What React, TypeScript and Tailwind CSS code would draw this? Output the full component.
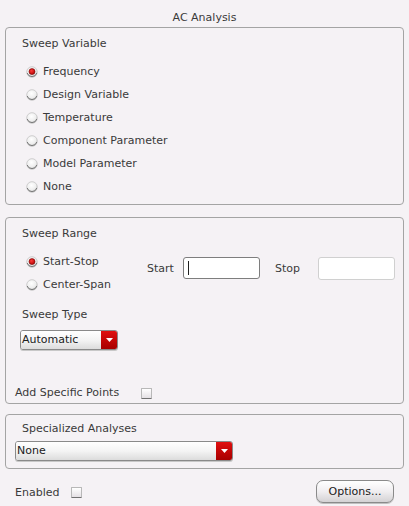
import React from "react";

function Radio({ checked }: { checked?: boolean }) {
  return (
    <svg width="12" height="12" viewBox="0 0 12 12" className="shrink-0">
      <defs>
        <radialGradient id={checked ? "rgc" : "rgu"} cx="45%" cy="35%" r="70%">
          <stop offset="0%" stopColor="#ffffff" />
          <stop offset="60%" stopColor="#eeeeee" />
          <stop offset="100%" stopColor="#b8b8b8" />
        </radialGradient>
        <radialGradient id="red" cx="40%" cy="35%" r="70%">
          <stop offset="0%" stopColor="#ff3a3a" />
          <stop offset="100%" stopColor="#b00000" />
        </radialGradient>
      </defs>
      <circle cx="6" cy="6" r="5.3" fill={`url(#${checked ? "rgc" : "rgu"})`} stroke="#c4c4c4" strokeWidth="0.8" />
      <path d="M1.2 7 A5 5 0 0 0 10.8 7" fill="none" stroke="#7a7a7a" strokeWidth="1" />
      {checked && <circle cx="6" cy="5.6" r="3" fill="url(#red)" stroke="#700000" strokeWidth="0.6" />}
    </svg>
  );
}

function Check() {
  return (
    <span className="inline-block w-[11px] h-[11px] border border-[#b8b8b8] border-b-[#707070] rounded-[1px] bg-gradient-to-b from-[#ffffff] to-[#e4e0e4]" />
  );
}

function Dropdown({ label, width }: { label: string; width: string }) {
  return (
    <div className={`flex h-[20px] ${width} rounded-[3px] border border-[#8a8a8a] overflow-hidden shadow-[0_1px_0_#c8c8c8]`}>
      <div className="flex-1 flex items-center pl-[1px] bg-gradient-to-b from-[#ffffff] via-[#f4f4f4] to-[#dcdcdc] text-[#202020]">
        {label}
      </div>
      <div className="w-[16px] flex items-center justify-center bg-gradient-to-b from-[#e01010] to-[#a80000]">
        <svg width="7" height="4" viewBox="0 0 7 4">
          <path d="M0 0 L7 0 L3.5 4 Z" fill="#ffffff" />
        </svg>
      </div>
    </div>
  );
}

const sweepVars = [
  "Frequency",
  "Design Variable",
  "Temperature",
  "Component Parameter",
  "Model Parameter",
  "None",
];

export default function App() {
  return (
    <div
      className="w-[409px] h-[506px] bg-[#f5f2f5] text-[11px] leading-[14px] text-[#3a3a3a] overflow-hidden"
      style={{ fontFamily: '"DejaVu Sans", sans-serif' }}
    >
      <div className="h-[27px] pt-[11px] text-center">AC Analysis</div>

      {/* Sweep Variable */}
      <div className="ml-[5px] w-[399px] h-[178px] border border-[#a4a4a4] rounded-[4px] pl-[16px] pt-[9px]">
        <div>Sweep Variable</div>
        <div className="mt-[9px] pl-[4px]">
          {sweepVars.map((v, i) => (
            <div key={v} className="h-[23px] flex items-center gap-[5px]">
              <Radio checked={i === 0} />
              <span>{v}</span>
            </div>
          ))}
        </div>
      </div>

      {/* Sweep Range */}
      <div className="ml-[5px] mt-[12px] w-[399px] h-[187px] border border-[#a4a4a4] rounded-[4px] pt-[9px]">
        <div className="pl-[16px]">Sweep Range</div>
        <div className="mt-[9px] flex items-start">
          <div className="pl-[20px] w-[141px]">
            <div className="h-[23px] flex items-center gap-[5px]">
              <Radio checked />
              <span>Start-Stop</span>
            </div>
            <div className="h-[23px] flex items-center gap-[5px]">
              <Radio />
              <span>Center-Span</span>
            </div>
          </div>
          <div className="mt-[7px] flex items-center h-[22px]">
            <span className="w-[36px] pt-[2px]">Start</span>
            <div className="w-[77px] h-[22px] bg-white border border-[#7e7e7e] rounded-[3px] flex items-center pl-[4px]">
              <span className="w-px h-[14px] bg-[#202020]" />
            </div>
            <span className="ml-[15px] w-[43px] pt-[2px]">Stop</span>
            <div className="w-[77px] h-[23px] bg-white border border-[#d0d0d0] rounded-[3px]" />
          </div>
        </div>
        <div className="pl-[16px] mt-[12px]">Sweep Type</div>
        <div className="pl-[14px] mt-[8px]">
          <Dropdown label="Automatic" width="w-[98px]" />
        </div>
        <div className="mt-[36px] pl-[9px] flex items-center h-[14px]">
          <span>Add Specific Points</span>
          <span className="ml-[22px] flex">
            <Check />
          </span>
        </div>
      </div>

      {/* Specialized Analyses */}
      <div className="ml-[5px] mt-[10px] w-[399px] h-[55px] border border-[#a4a4a4] rounded-[4px] pt-[7px]">
        <div className="pl-[16px]">Specialized Analyses</div>
        <div className="pl-[9px] mt-[5px]">
          <Dropdown label="None" width="w-[218px]" />
        </div>
      </div>

      {/* Bottom */}
      <div className="mt-[11px] h-[23px] flex items-center justify-between pl-[15px] pr-[15px]">
        <div className="flex items-center pt-[2px]">
          <span>Enabled</span>
          <span className="ml-[12px] flex">
            <Check />
          </span>
        </div>
        <button className="w-[78px] h-[23px] rounded-[7px] border border-[#8a8a8a] bg-gradient-to-b from-[#ffffff] via-[#f0eef0] to-[#d4d2d4] text-[#202020] text-[11px] shadow-[0_1px_0_#c0c0c0]">
          Options...
        </button>
      </div>
    </div>
  );
}
